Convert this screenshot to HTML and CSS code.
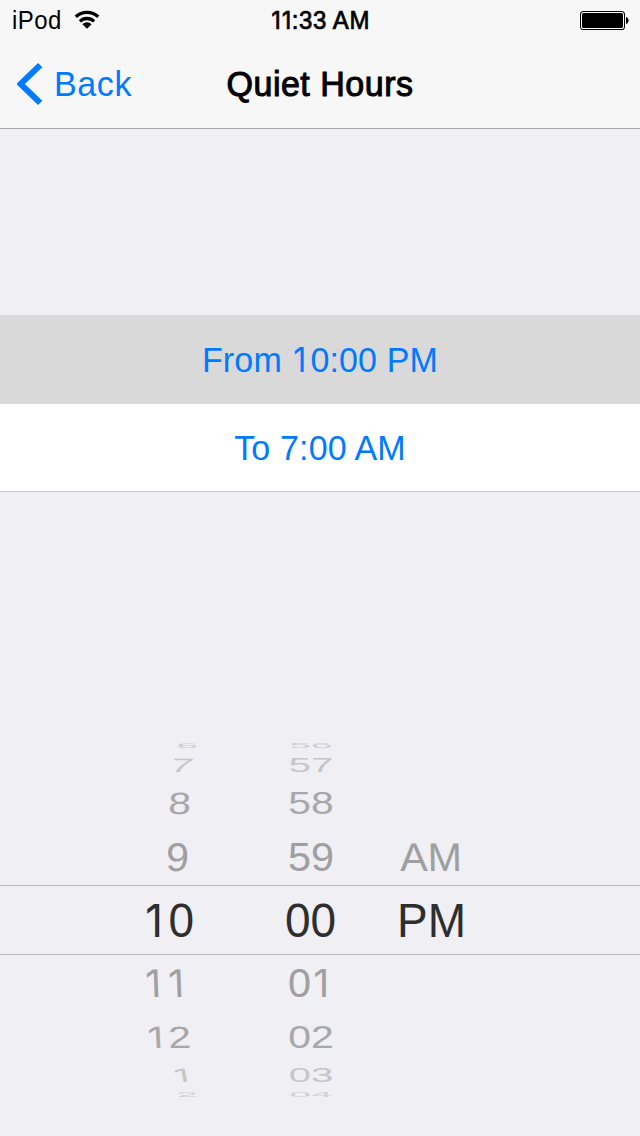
FILE: index.html
```html
<!DOCTYPE html>
<html lang="en">
<head>
<meta charset="utf-8">
<title>Quiet Hours</title>
<link rel="stylesheet" href="styles.css">
</head>
<body>
<div class="screen">
  <header class="header">
    <div class="status">
      <div class="carrier">
        <span class="label">iPod</span>
        <svg class="wifi" width="26" height="20" viewBox="0 0 26 20">
          <g fill="none" stroke="#000" stroke-width="3.3">
            <path d="M1.8 6.8A16.2 16.2 0 0 1 24.2 6.8"/>
            <path d="M5.9 11.4A10.2 10.2 0 0 1 20.1 11.4"/>
          </g>
          <path d="M8.4 14.2A6.4 6.4 0 0 1 17.6 14.2L13 18.8Z"/>
        </svg>
      </div>
      <span class="label clock"><span class="one tight">1</span><span class="one tight">1</span>:33 AM</span>
      <svg class="battery" width="50" height="20" viewBox="0 0 50 20">
        <rect x="1" y="1" width="45" height="19" rx="3.6"/>
        <rect x="2" y="2" width="43" height="17" rx="2.6" fill="#fff"/>
        <rect x="3" y="3" width="41" height="15" rx="1.6"/>
        <path d="M47 7C50.4 7.5 50.4 13.5 47 14Z"/>
      </svg>
    </div>
    <nav class="nav">
      <a class="back">
        <svg width="26" height="42" viewBox="0 0 26 42"><path d="M23.2 2.2L3.5 21L23.2 39.8" fill="none" stroke="#007aff" stroke-width="6"/></svg>
        <span class="label">Back</span>
      </a>
      <h1 class="label title">Quiet Hours</h1>
    </nav>
  </header>
  <main class="times">
    <div class="time active"><span class="label">From <span class="one">1</span>0:00 PM</span></div>
    <div class="time"><span class="label">To 7:00 AM</span></div>
  </main>
  <section class="picker">
    <div class="row d4 up"><span class="hour">6</span><span class="minute">56</span></div>
    <div class="row d3 up"><span class="hour">7</span><span class="minute">57</span></div>
    <div class="row d2 up"><span class="hour">8</span><span class="minute">58</span></div>
    <div class="row d1 up"><span class="hour">9</span><span class="minute">59</span><span class="period">AM</span></div>
    <div class="row current"><span class="hour"><span class="one">1</span>0</span><span class="minute">00</span><span class="period">PM</span></div>
    <div class="row d1 down"><span class="hour"><span class="one">1</span><span class="one">1</span></span><span class="minute">0<span class="one">1</span></span></div>
    <div class="row d2 down"><span class="hour"><span class="one">1</span>2</span><span class="minute">02</span></div>
    <div class="row d3 down"><span class="hour"><span class="one">1</span></span><span class="minute">03</span></div>
    <div class="row d4 down"><span class="hour">2</span><span class="minute">04</span></div>
  </section>
</div>
</body>
</html>
```
FILE: styles.css
```css
* { box-sizing: border-box; }
body {
  margin: 0;
  background: #efeff4;
  font-family: "Liberation Sans", Arial, sans-serif;
}
.screen {
  width: 640px;
  height: 1136px;
  overflow: hidden;
  display: flex;
  flex-direction: column;
}
.label { display: block; transform: scaleY(1.04); white-space: nowrap; }

/* Footless numeral one, set on the same advance as the other digits */
.one {
  display: inline-block;
  width: .588em;
  padding-right: .07em;
  font-family: Inter, sans-serif;
  font-size: .945em;
  letter-spacing: 0;
  text-align: center;
  line-height: 0;
}
.one.tight { width: .46em; padding-right: 0; }

.header {
  height: 129px;
  background: #f7f7f7;
  border-bottom: 1px solid #a7a7aa;
}
.status {
  height: 40px;
  padding: 1px 11px 0 12px;
  display: grid;
  grid-template-columns: 1fr auto 1fr;
  align-items: center;
  font-size: 24px;
  line-height: 40px;
}
.carrier { display: flex; align-items: center; gap: 12px; letter-spacing: .4px; }
.wifi { margin-top: -2px; }
.clock { -webkit-text-stroke: .7px #000; letter-spacing: .6px; }
.battery { justify-self: end; margin-top: -2px; }
.nav {
  height: 88px;
  padding: 0 17px;
  display: grid;
  grid-template-columns: 1fr auto 1fr;
  align-items: center;
  font-size: 34px;
}
.back { display: flex; align-items: center; gap: 11px; color: #007aff; letter-spacing: .6px; }
.title { margin: 0; font-size: 34px; font-weight: 400; letter-spacing: .5px; -webkit-text-stroke: 1px #000; }

.times { margin-top: 186px; }
.time {
  height: 88px;
  padding-top: 2px;
  display: flex;
  align-items: center;
  justify-content: center;
  background: #fff;
  border-bottom: 1px solid #c8c7cc;
  color: #007aff;
  font-size: 34px;
  letter-spacing: .15px;
}
.time.active { height: 89px; background: #d9d9d9; border: 0; }

.picker { margin-top: 251px; }
.row {
  display: grid;
  grid-template-columns: 195px 166px 140px;
  align-items: center;
  color: #9f9fa2;
  font-size: 46px;
  line-height: 0;
}
.hour, .minute, .period { transform: scale(var(--sx), var(--sy)) skewX(var(--lean, 0deg)); }
.hour { text-align: right; transform-origin: right center; translate: var(--shift) 0; }
.minute { margin-left: 66px; text-align: center; --lean: 0deg; }
.period { text-align: center; --lean: 1deg; }
.up { --lean: -2deg; }
.down { --lean: 2deg; }
.d1 { height: 61px; --sx: .9; --sy: .87; --shift: -6px; }
.d1.up { padding-top: 4px; }
.d1.down { padding-bottom: 6px; }
.d2 { height: 41px; --sx: .89; --sy: .67; --shift: -4px; color: #a8a8ab; }
.d2.up { padding-bottom: 2px; }
.d3 { height: 36px; --sx: .87; --sy: .42; --shift: -2px; color: #c6c6ca; }
.d3.up { --lean: -8deg; }
.d3.down { --lean: 5deg; --shift: -1px; }
.d4 { height: 4px; --sx: .84; --sy: .15; --shift: 3px; color: #d0d0d4; }
.d4.up { padding-top: 2px; }
.d4.down { padding-bottom: 1px; }
.current {
  height: 70px;
  border-top: 1px solid #b9b9be;
  border-bottom: 1px solid #b9b9be;
  grid-template-columns: 194px 167px 141px;
  color: #2e2e2f;
  --sx: 1;
  --sy: 1.05;
  --shift: 0px;
}
.current .period { --lean: 0deg; }
```
